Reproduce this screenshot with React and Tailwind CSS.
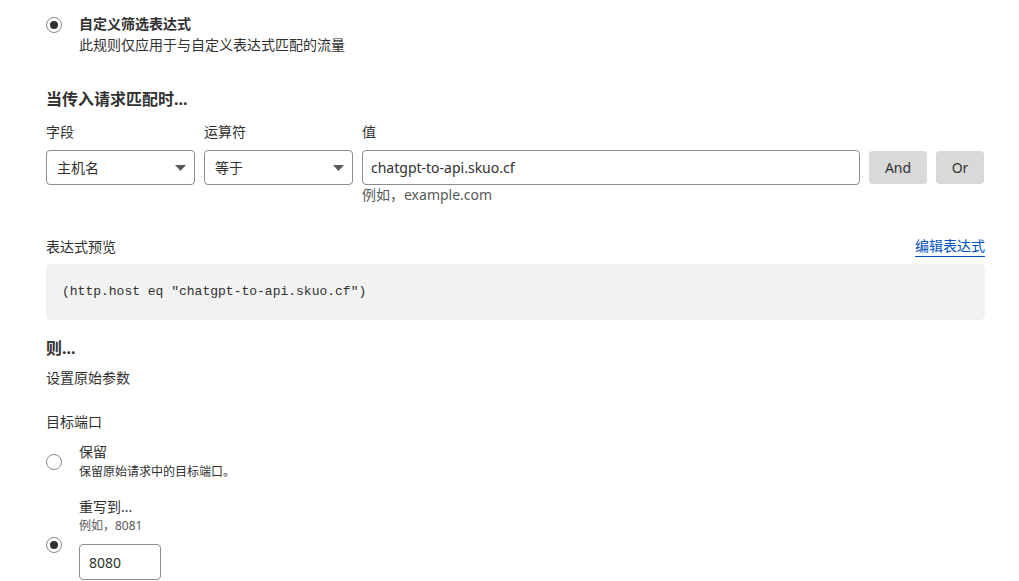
import React from "react";

const font = { fontFamily: '"Noto Sans", "Noto Sans CJK SC", sans-serif' };

function Radio({ checked }) {
  return (
    <div className="w-[16px] h-[16px] rounded-full border border-[#8a8a8a] bg-white flex items-center justify-center shrink-0">
      {checked && <div className="w-[8px] h-[8px] rounded-full bg-[#313131]" />}
    </div>
  );
}

function Select({ value }) {
  return (
    <div className="w-[149px] h-[35px] border border-[#8c8c8c] rounded-[4px] flex items-center justify-between pl-[10px] pr-[8px] bg-white">
      <span className="text-[14px] text-[#313131]">{value}</span>
      <svg width="11" height="6" viewBox="0 0 11 6"><path d="M0 0 L11 0 L5.5 6 Z" fill="#595959" /></svg>
    </div>
  );
}

export default function App() {
  return (
    <div className="w-[1019px] h-[581px] bg-white overflow-hidden text-[#313131]" style={font}>
      <div className="pl-[46px] w-[985px] pt-[14px]">
        <div className="flex items-start">
          <div className="mt-[3px]"><Radio checked /></div>
          <div className="ml-[17px]">
            <div className="text-[14px] leading-[20px] font-bold">自定义筛选表达式</div>
            <div className="text-[14px] leading-[20px] mt-[1px]">此规则仅应用于与自定义表达式匹配的流量</div>
          </div>
        </div>

        <div className="mt-[32px] text-[16px] leading-[24px] font-bold">当传入请求匹配时...</div>

        <div className="mt-[11px] flex items-start gap-[9px]">
          <div className="flex flex-col">
            <div className="text-[14px] leading-[20px]">字段</div>
            <div className="mt-[8px]"><Select value="主机名" /></div>
          </div>
          <div className="flex flex-col">
            <div className="text-[14px] leading-[20px]">运算符</div>
            <div className="mt-[8px]"><Select value="等于" /></div>
          </div>
          <div className="flex flex-col">
            <div className="text-[14px] leading-[20px]">值</div>
            <div className="mt-[8px] w-[498px] h-[35px] border border-[#8c8c8c] rounded-[4px] flex items-center pl-[8px] bg-white">
              <span className="text-[14px] text-[#313131]">chatgpt-to-api.skuo.cf</span>
            </div>
            <div className="text-[14px] leading-[20px] text-[#595959]">例如，example.com</div>
          </div>
          <div className="flex gap-[9px] mt-[29px]">
            <div className="w-[58px] h-[33px] bg-[#d9d9d9] rounded-[4px] flex items-center justify-center text-[14px]">And</div>
            <div className="w-[48px] h-[33px] bg-[#d9d9d9] rounded-[4px] flex items-center justify-center text-[14px]">Or</div>
          </div>
        </div>

        <div className="mt-[31px] flex items-end justify-between">
          <div className="text-[14px] leading-[20px]">表达式预览</div>
          <a className="text-[14px] leading-[20px] text-[#0051c3] border-b border-[#0051c3]">编辑表达式</a>
        </div>
        <div className="mt-[7px] h-[56px] bg-[#f2f2f2] rounded-[5px] flex items-center pl-[16px]">
          <span className="text-[13px] text-[#313131]" style={{ fontFamily: '"Liberation Mono", "Noto Sans CJK SC", monospace' }}>
            (http.host eq "chatgpt-to-api.skuo.cf")
          </span>
        </div>

        <div className="mt-[16px] text-[16px] leading-[24px] font-bold">则...</div>
        <div className="mt-[8px] text-[14px] leading-[20px]">设置原始参数</div>

        <div className="mt-[24px] text-[14px] leading-[20px]">目标端口</div>

        <div className="mt-[10px] flex items-center">
          <Radio />
          <div className="ml-[17px]">
            <div className="text-[14px] leading-[20px]">保留</div>
            <div className="text-[12px] leading-[18px] mt-[1px] text-[#313131]">保留原始请求中的目标端口。</div>
          </div>
        </div>

        <div className="mt-[16px] flex items-start">
          <div className="mt-[40px]"><Radio checked /></div>
          <div className="ml-[17px]">
            <div className="text-[14px] leading-[20px]">重写到...</div>
            <div className="text-[12px] leading-[18px] text-[#595959]">例如，8081</div>
            <div className="mt-[9px] w-[82px] h-[36px] border border-[#8c8c8c] rounded-[4px] flex items-center pl-[9px]">
              <span className="text-[14px]">8080</span>
            </div>
          </div>
        </div>
      </div>
    </div>
  );
}
